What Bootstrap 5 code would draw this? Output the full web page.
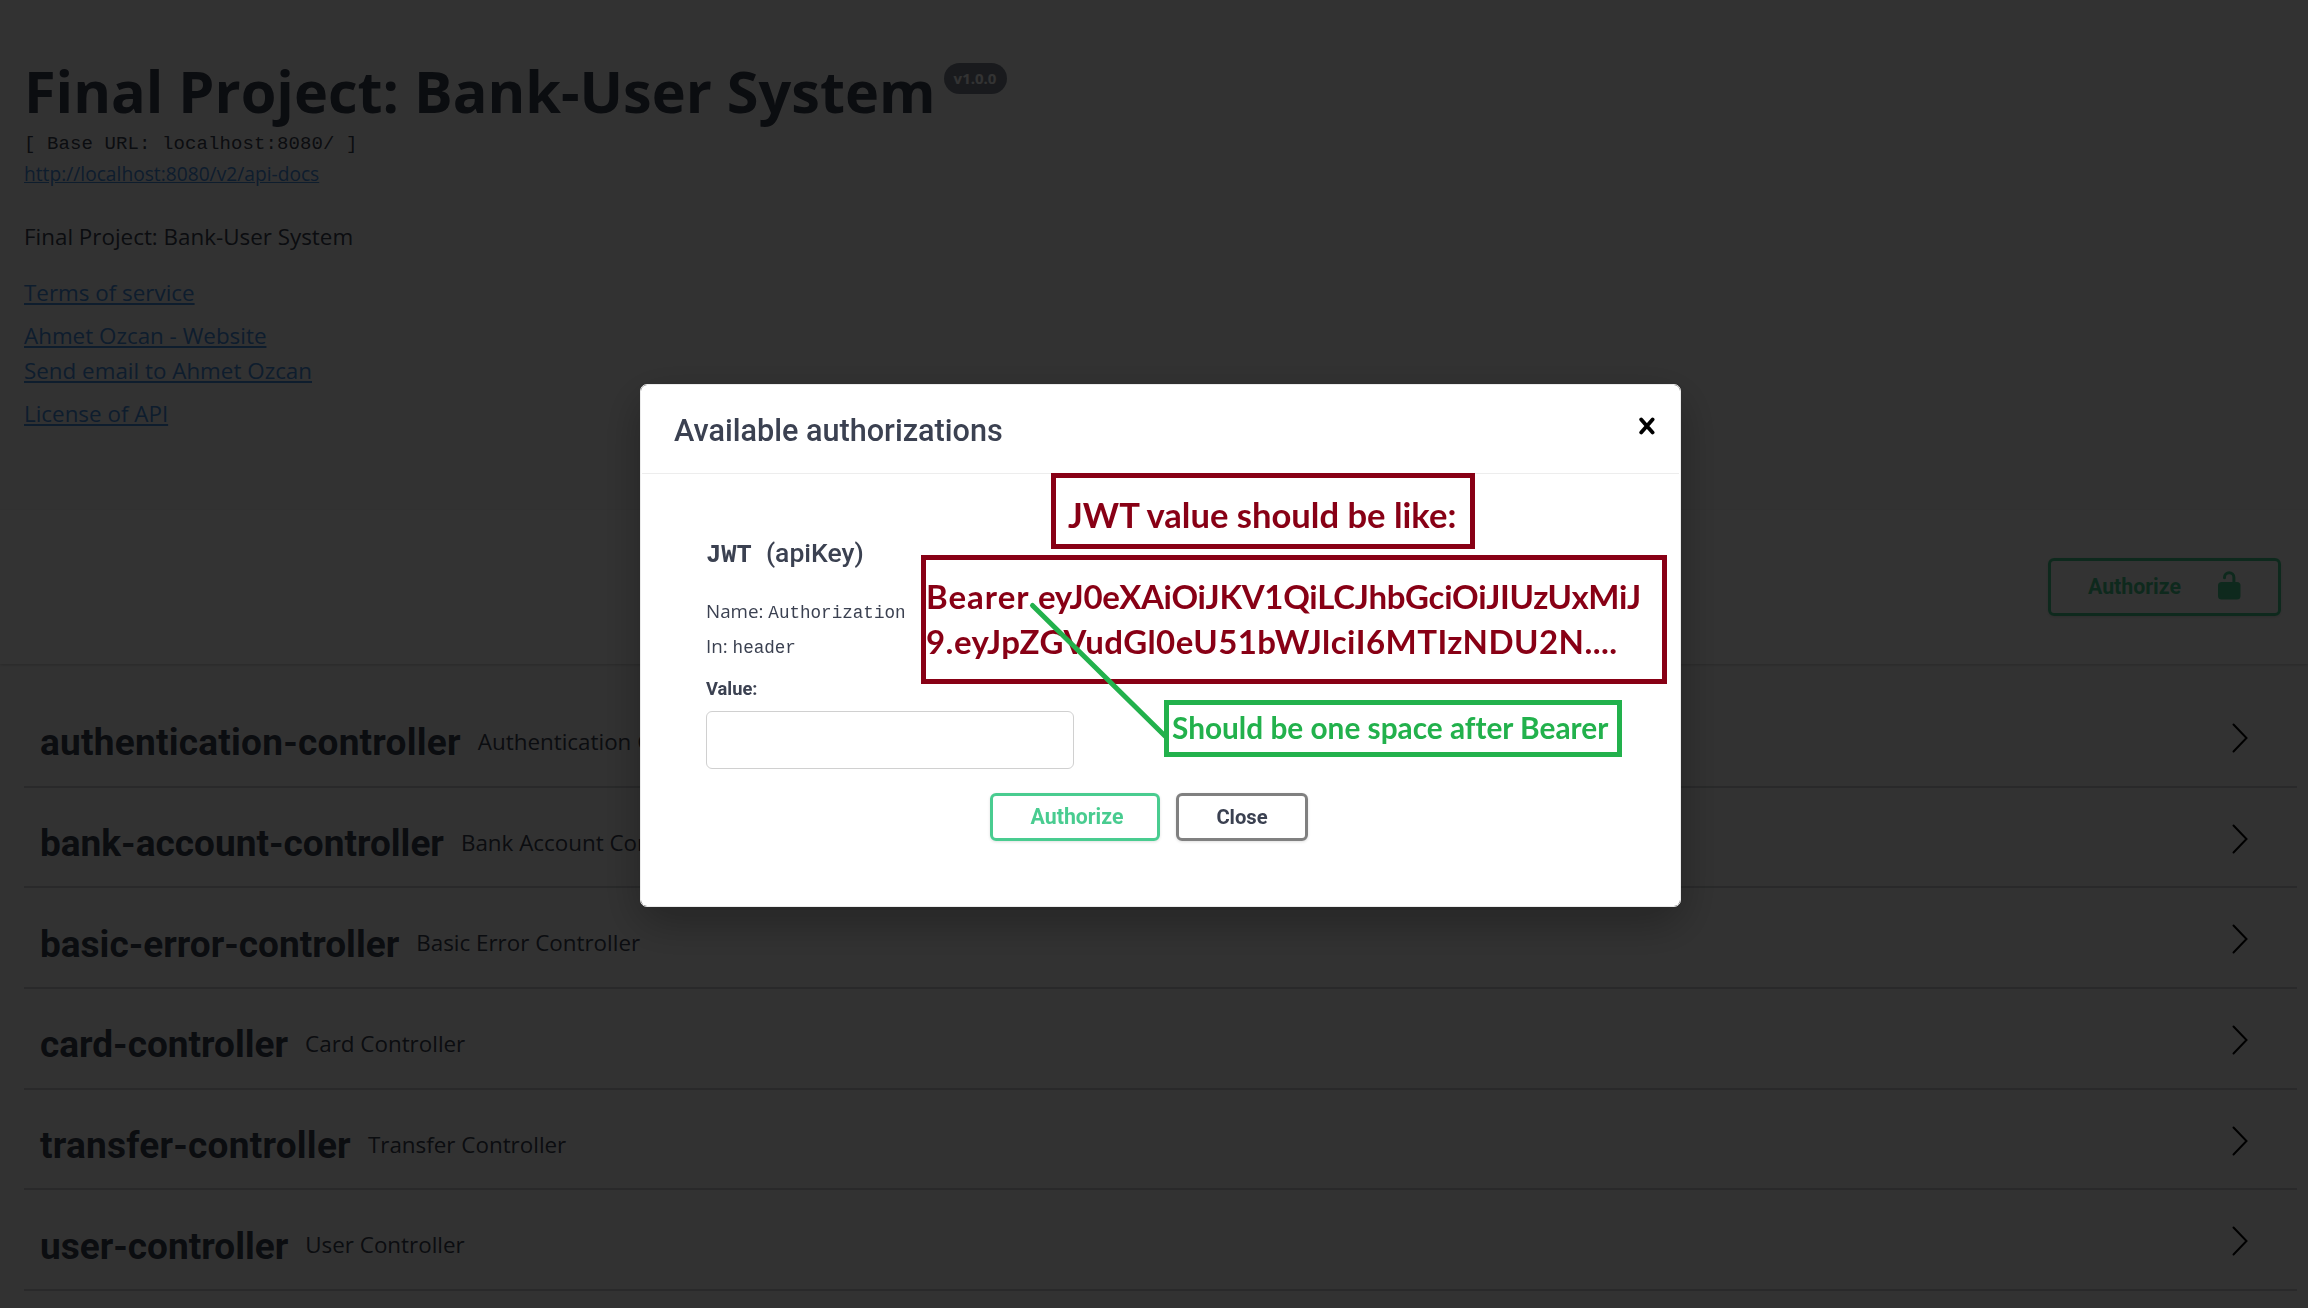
<!DOCTYPE html>
<html lang="en">
<head>
<meta charset="utf-8">
<meta name="viewport" content="width=device-width, initial-scale=1">
<title>Final Project: Bank-User System</title>
<link href="https://cdn.jsdelivr.net/npm/bootstrap@5.3.0/dist/css/bootstrap.min.css" rel="stylesheet">
<style>
  html, body { height: 100%; overflow: hidden; }
  body { background: #fafafa; color: #3b4151; font-family: "Open Sans", sans-serif; }
  .page { height: 1308px; overflow: hidden; }
  .info { height: 510px; padding: 52px 24px 0; }
  .info-title { font-size: 57.6px; line-height: 78px; font-weight: 700; }
  .version { background: #7d8492; color: #fff; width: 63px; height: 31px; border-radius: 16px; font-size: 15px; line-height: 31px; margin: 11px 0 0 8px; }
  .base-url { font-family: "Liberation Mono", monospace; font-size: 19px; line-height: 28px; letter-spacing: .1px; white-space: pre; }
  .docs-link { font-size: 19.2px; line-height: 31px; }
  .info-line { font-size: 22.4px; line-height: 34px; }
  .info-desc { margin-top: 31px; }
  .info-terms { margin-top: 22px; }
  .info-gap { margin-top: 9px; }
  .info-mail { margin-top: 1px; }
  .info a { color: #4990e2; }
  .scheme { height: 154px; background: #fff; box-shadow: 0 1px 3px rgba(0,0,0,.2); padding: 0 27px 0 0; }
  .btn-swagger { font-family: Roboto, sans-serif; font-weight: 700; border: 3px solid #808080; border-radius: 6px; color: #3b4151; background: transparent; box-shadow: 0 1px 3px rgba(0,0,0,.12); padding: 0; }
  .btn-swagger.green { color: #49cc90; border-color: #49cc90; }
  .btn-top { width: 233px; height: 58px; font-size: 21.3px; padding: 0 37px; }
  .btn-top svg { margin-bottom: 4px; }
  .tags { padding: 23px 11.5px 0 24px; }
  .tag-row { height: 100.7px; border-bottom: 2px solid rgba(59,65,81,.24); padding: 14px 49px 0 16px; }
  .tag-name { font: 700 37px/50px Roboto, sans-serif; }
  .tag-name.wide { letter-spacing: .24px; }
  .tag-text { font-size: 22.4px; line-height: 32px; margin: 0 0 3px 17px; }
  .chevron { margin-bottom: 11px; }
  .modal-backdrop { --bs-backdrop-opacity: .8; }
  .auth-dialog { width: 1041px; max-width: none; margin: 384px 0 0 640px; }
  .auth-content { height: 523px; border: 1px solid #ebebeb; border-radius: 7px; box-shadow: 0 15px 45px rgba(0,0,0,.3); color: #3b4151; }
  .auth-head { height: 89px; padding: 3px 24px 0 32px; border-bottom: 1px solid #ededed; margin: 0 1px; }
  .auth-head h2 { font: 500 30.6px/40px Roboto, sans-serif; }
  .auth-x { margin-bottom: 10px; }
  .auth-body { padding: 59px 0 0 65px; }
  .scheme-name { font: 500 26.5px/40px Roboto, sans-serif; height: 40px; }
  .scheme-name code, .prop code { font-family: "Liberation Mono", monospace; color: inherit; line-height: 1; }
  .scheme-name code { font-size: 25.5px; font-weight: 700; }
  .scheme-name span { margin-left: 14px; }
  .prop { font-size: 18.8px; line-height: 35px; height: 35px; }
  .prop code { font-size: 17.6px; }
  .prop-first { margin-top: 21px; }
  .value-label { font: 700 18.3px/30px Roboto, sans-serif; margin-top: 10px; }
  .value-input { width: 368px; height: 58px; margin-top: 7px; border: 1px solid #d0d0d0; border-radius: 6px; }
  .btn-row { margin: 24px 0 0 284px; gap: 16px; }
  .btn-auth { width: 170px; height: 48px; font-size: 21.3px; padding-left: 4px; }
  .btn-close-it { width: 132px; height: 48px; font-size: 20.2px; }
  .note { font-family: Lato, sans-serif; font-weight: 700; font-variant-ligatures: none; border: 5px solid #880015; color: #880015; white-space: nowrap; }
  .note-intro { left: 410px; top: 88px; width: 424px; height: 76px; font-size: 34.6px; line-height: 73px; padding-left: 12px; }
  .note-token { left: 280px; top: 170px; width: 746px; height: 129px; font-size: 33px; line-height: 45px; padding: 14px 0 0 0; }
  .note-token .l1 { letter-spacing: -.28px; }
  .note-token .bearer { letter-spacing: 1px; }
  .note-token .l2 { letter-spacing: .45px; }
  .note-space { left: 523px; top: 315px; width: 458px; height: 57px; font-size: 29.8px; line-height: 46px; color: #22b14c; border-color: #22b14c; padding-left: 3px; }
  .note-line { left: 380px; top: 210px; }
</style>
</head>
<body>
<div class="page">
  <header class="info">
    <div class="d-flex align-items-start">
      <h1 class="info-title m-0">Final Project: Bank-User System</h1>
      <span class="version d-block text-center fw-bold">v1.0.0</span>
    </div>
    <div class="base-url">[ Base URL: localhost:8080/ ]</div>
    <div class="docs-link"><a href="#">http://localhost:8080/v2/api-docs</a></div>
    <div class="info-line info-desc">Final Project: Bank-User System</div>
    <div class="info-line info-terms"><a href="#">Terms of service</a></div>
    <div class="info-line info-gap"><a href="#">Ahmet Ozcan - Website</a></div>
    <div class="info-line info-mail"><a href="#">Send email to Ahmet Ozcan</a></div>
    <div class="info-line info-gap"><a href="#">License of API</a></div>
  </header>

  <section class="scheme d-flex justify-content-end align-items-center">
    <button class="btn btn-swagger green btn-top d-flex justify-content-between align-items-center">
      <span>Authorize</span>
      <svg width="23" height="29" viewBox="0 0 23 29" fill="none"><rect x="0" y="11" width="22.5" height="17.5" rx="3.5" fill="#49cc90"/><path d="M6.500 6.800V6.500a4.700 4.700 0 0 1 9.400 0V12" stroke="#49cc90" stroke-width="3" stroke-linecap="round"/></svg>
    </button>
  </section>

  <main class="tags">
    <div class="tag-row d-flex align-items-center"><span class="tag-name wide">authentication-controller</span><span class="tag-text">Authentication Controller</span><svg class="chevron ms-auto" width="16" height="30" viewBox="0 0 16 30" fill="none" stroke="#000" stroke-width="2" stroke-linecap="round"><path d="M1.500 1.500 14.500 15 1.500 28.500"/></svg></div>
    <div class="tag-row d-flex align-items-center"><span class="tag-name">bank-account-controller</span><span class="tag-text">Bank Account Controller</span><svg class="chevron ms-auto" width="16" height="30" viewBox="0 0 16 30" fill="none" stroke="#000" stroke-width="2" stroke-linecap="round"><path d="M1.500 1.500 14.500 15 1.500 28.500"/></svg></div>
    <div class="tag-row d-flex align-items-center"><span class="tag-name">basic-error-controller</span><span class="tag-text">Basic Error Controller</span><svg class="chevron ms-auto" width="16" height="30" viewBox="0 0 16 30" fill="none" stroke="#000" stroke-width="2" stroke-linecap="round"><path d="M1.500 1.500 14.500 15 1.500 28.500"/></svg></div>
    <div class="tag-row d-flex align-items-center"><span class="tag-name">card-controller</span><span class="tag-text">Card Controller</span><svg class="chevron ms-auto" width="16" height="30" viewBox="0 0 16 30" fill="none" stroke="#000" stroke-width="2" stroke-linecap="round"><path d="M1.500 1.500 14.500 15 1.500 28.500"/></svg></div>
    <div class="tag-row d-flex align-items-center"><span class="tag-name wide">transfer-controller</span><span class="tag-text">Transfer Controller</span><svg class="chevron ms-auto" width="16" height="30" viewBox="0 0 16 30" fill="none" stroke="#000" stroke-width="2" stroke-linecap="round"><path d="M1.500 1.500 14.500 15 1.500 28.500"/></svg></div>
    <div class="tag-row d-flex align-items-center"><span class="tag-name">user-controller</span><span class="tag-text">User Controller</span><svg class="chevron ms-auto" width="16" height="30" viewBox="0 0 16 30" fill="none" stroke="#000" stroke-width="2" stroke-linecap="round"><path d="M1.500 1.500 14.500 15 1.500 28.500"/></svg></div>
  </main>
</div>

<div class="modal-backdrop show"></div>
<div class="modal d-block overflow-hidden" tabindex="-1">
  <div class="modal-dialog auth-dialog">
    <div class="modal-content auth-content">
      <div class="auth-head d-flex align-items-center justify-content-between">
        <h2 class="m-0">Available authorizations</h2>
        <svg class="auth-x" width="16" height="18" viewBox="0 0 16 18" stroke="#000" stroke-width="3.800" stroke-linecap="round"><path d="M2.200 2.400 13.600 15.400M13.600 2.400 2.200 15.400"/></svg>
      </div>
      <div class="auth-body">
        <div class="scheme-name"><code>JWT</code><span>(apiKey)</span></div>
        <div class="prop prop-first">Name: <code>Authorization</code></div>
        <div class="prop">In: <code>header</code></div>
        <div class="value-label">Value:</div>
        <input class="value-input d-block bg-white" type="text" aria-label="Value">
        <div class="btn-row d-flex">
          <button class="btn btn-swagger green btn-auth">Authorize</button>
          <button class="btn btn-swagger btn-close-it">Close</button>
        </div>
      </div>
      <div class="note note-intro position-absolute">JWT value should be like:</div>
      <div class="note note-token position-absolute"><div class="l1"><span class="bearer">Bearer </span>eyJ0eXAiOiJKV1QiLCJhbGciOiJIUzUxMiJ</div><div class="l2">9.eyJpZGVudGl0eU51bWJlciI6MTIzNDU2N....</div></div>
      <div class="note note-space position-absolute">Should be one space after Bearer</div>
      <svg class="note-line position-absolute" width="150" height="160" viewBox="0 0 150 160"><path d="M11.500 10.500 144 141" stroke="#22b14c" stroke-width="5" stroke-linecap="round"/></svg>
    </div>
  </div>
</div>
<script src="https://cdn.jsdelivr.net/npm/bootstrap@5.3.0/dist/js/bootstrap.bundle.min.js"></script>
</body>
</html>
